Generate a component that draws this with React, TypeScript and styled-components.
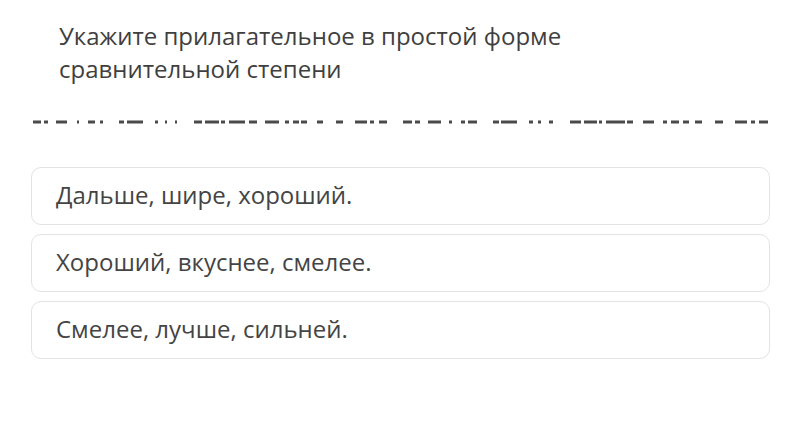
import React from "react";
import styled, { createGlobalStyle } from "styled-components";

const GlobalStyle = createGlobalStyle`
  body {
    margin: 0;
    background: #ffffff;
    font-family: "Open Sans", "Noto Sans", sans-serif;
  }
`;

const Page = styled.div`
  width: 800px;
  height: 439px;
  box-sizing: border-box;
  padding-top: 19px;
  background: #ffffff;
`;

const Title = styled.div`
  padding: 0 220px 0 59px;
  font-size: 24px;
  line-height: 33px;
  color: #3f3f3f;
`;

const Hidden = styled.svg`
  display: block;
  margin-top: 35px;
`;

const Options = styled.div`
  display: flex;
  flex-direction: column;
  gap: 9px;
  margin: 43px 30px 0 31px;
`;

const Option = styled.div`
  height: 58px;
  box-sizing: border-box;
  display: flex;
  align-items: center;
  padding: 0 24px 3px;
  border: 1px solid #e3e3e3;
  border-radius: 10px;
  font-size: 24px;
  color: #444444;
`;

// dashes: [start x, end x]
const dashes: [number, number][] = [
  [33, 41], [44, 48], [56, 67], [77, 79], [88, 95], [100, 103],
  [119, 124], [127, 143], [155, 158], [165, 167], [175, 177],
  [194, 202], [205, 219], [221, 225], [229, 245], [249, 257],
  [265, 279], [285, 289], [293, 299], [301, 307], [317, 323],
  [336, 343], [355, 367], [370, 374], [379, 387],
  [403, 412], [415, 420], [428, 441], [449, 452], [461, 465], [468, 477],
  [493, 499], [501, 517], [529, 533], [538, 541], [549, 553],
  [570, 581], [584, 597], [599, 602], [606, 625], [627, 633],
  [643, 654], [663, 667], [671, 679], [683, 689], [695, 702],
  [715, 723], [735, 747], [751, 755], [759, 768],
];

const answers = [
  "Дальше, шире, хороший.",
  "Хороший, вкуснее, смелее.",
  "Смелее, лучше, сильней.",
];

const App = () => {
  return (
    <Page>
      <GlobalStyle />
      <Title>Укажите прилагательное в простой форме сравнительной степени</Title>
      <Hidden width="800" height="4" viewBox="0 0 800 4">
        {dashes.map(([a, b]) => (
          <rect key={a} x={a} y={0.5} width={b - a} height={3} fill="#4a4a4a" />
        ))}
      </Hidden>
      <Options>
        {answers.map((item) => (
          <Option key={item}>{item}</Option>
        ))}
      </Options>
    </Page>
  );
};

export default App;
